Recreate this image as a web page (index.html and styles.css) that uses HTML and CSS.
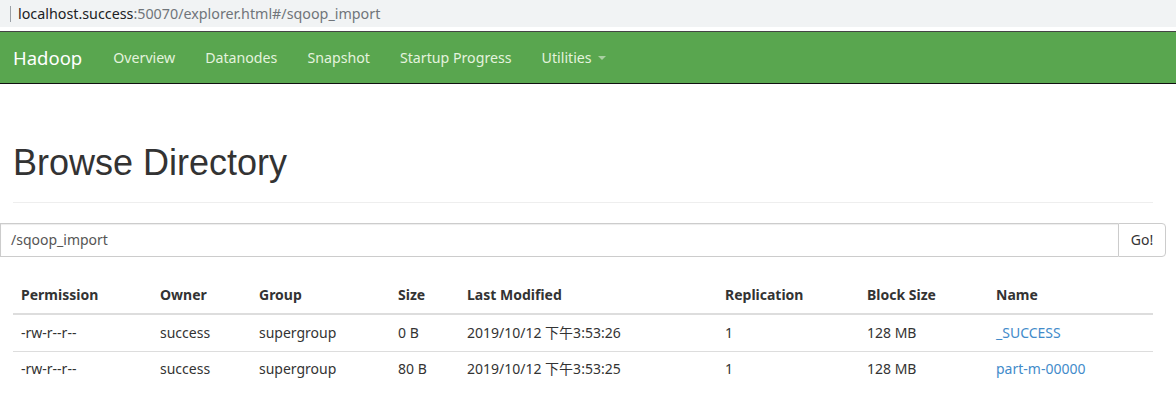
FILE: index.html
```html
<!DOCTYPE html>
<html>
<head>
<meta charset="utf-8">
<link rel="stylesheet" href="styles.css">
</head>
<body>
<div class="addr">
  <span class="addr-sep"></span>
  <span class="addr-text"><span class="host">localhost.success</span>:50070/explorer.html#/sqoop_import</span>
</div>
<nav class="navbar">
  <span class="brand">Hadoop</span>
  <span class="nav-item">Overview</span>
  <span class="nav-item">Datanodes</span>
  <span class="nav-item">Snapshot</span>
  <span class="nav-item">Startup Progress</span>
  <span class="nav-item">Utilities <span class="caret"></span></span>
</nav>
<div class="page-header">
  <h1>Browse Directory</h1>
</div>
<div class="input-group">
  <div class="path-input">/sqoop_import</div>
  <div class="go-btn">Go!</div>
</div>
<table class="files">
  <thead>
    <tr>
      <th class="c1">Permission</th>
      <th class="c2">Owner</th>
      <th class="c3">Group</th>
      <th class="c4">Size</th>
      <th class="c5">Last Modified</th>
      <th class="c6">Replication</th>
      <th class="c7">Block Size</th>
      <th class="c8">Name</th>
    </tr>
  </thead>
  <tbody>
    <tr>
      <td>-rw-r--r--</td>
      <td>success</td>
      <td>supergroup</td>
      <td>0 B</td>
      <td>2019/10/12 下午3:53:26</td>
      <td>1</td>
      <td>128 MB</td>
      <td><span class="link">_SUCCESS</span></td>
    </tr>
    <tr>
      <td>-rw-r--r--</td>
      <td>success</td>
      <td>supergroup</td>
      <td>80 B</td>
      <td>2019/10/12 下午3:53:25</td>
      <td>1</td>
      <td>128 MB</td>
      <td><span class="link">part-m-00000</span></td>
    </tr>
  </tbody>
</table>
</body>
</html>
```

FILE: styles.css
```css
html, body {
  margin: 0;
  padding: 0;
  background: #fff;
  font-family: "Noto Sans", "Noto Sans CJK SC", sans-serif;
  font-size: 14px;
  color: #333;
}
.addr {
  height: 27px;
  background: #f1f3f4;
  display: flex;
  align-items: center;
  margin-bottom: 4px;
}
.addr-sep {
  width: 1px;
  height: 16px;
  background: #9aa0a6;
  margin-left: 10px;
  margin-right: 7px;
}
.addr-text {
  font-size: 14.3px;
  color: #70757a;
}
.host {
  color: #202124;
}
.navbar {
  height: 51px;
  background: #59a64f;
  border-top: 1px solid #444;
  border-bottom: 1px solid #111;
  display: flex;
  align-items: center;
}
.brand {
  color: #fff;
  font-size: 18.5px;
  padding: 0 15px 0 13px;
  margin-right: 1px;
}
.nav-item {
  color: #e4f3de;
  font-size: 14.2px;
  padding: 0 15px;
  display: flex;
  align-items: center;
}
.caret {
  display: inline-block;
  width: 0;
  height: 0;
  margin-left: 6px;
  border-top: 4px solid #a9cfa2;
  border-left: 4px solid transparent;
  border-right: 4px solid transparent;
}
.page-header {
  margin: 59px 23px 20px 13px;
  padding-bottom: 9px;
  border-bottom: 1px solid #eee;
}
.page-header h1 {
  margin: 0 0 10px 0;
  font-family: "Liberation Sans", Arial, sans-serif;
  font-weight: normal;
  font-size: 36px;
  line-height: 1.1;
  color: #333;
}
.input-group {
  display: flex;
  margin-right: 10px;
  height: 34px;
}
.path-input {
  flex: 1;
  border: 1px solid #ccc;
  border-right: none;
  box-shadow: inset 0 1px 1px rgba(0,0,0,0.075);
  padding: 0 10px;
  display: flex;
  align-items: center;
  color: #555;
}
.go-btn {
  width: 46px;
  border: 1px solid #ccc;
  border-radius: 0 4px 4px 0;
  display: flex;
  align-items: center;
  justify-content: center;
  color: #333;
}
.files {
  margin: 20px 23px 0 13px;
  width: 1140px;
  border-collapse: collapse;
  table-layout: fixed;
}
.files th, .files td {
  text-align: left;
  padding: 8px;
  line-height: 20px;
  white-space: nowrap;
}
.files th {
  font-weight: bold;
  border-bottom: 2px solid #ddd;
}
.files td {
  border-top: 1px solid #ddd;
  padding: 7px 8px 8px 8px;
}
.files tbody tr:first-child td {
  border-top: none;
  padding-top: 8px;
  padding-bottom: 8px;
}
.c1 { width: 123px; }
.c2 { width: 83px; }
.c3 { width: 123px; }
.c4 { width: 53px; }
.c5 { width: 242px; }
.c6 { width: 126px; }
.c7 { width: 113px; }
.c8 { width: 149px; }
.link {
  color: #428bca;
}
```
